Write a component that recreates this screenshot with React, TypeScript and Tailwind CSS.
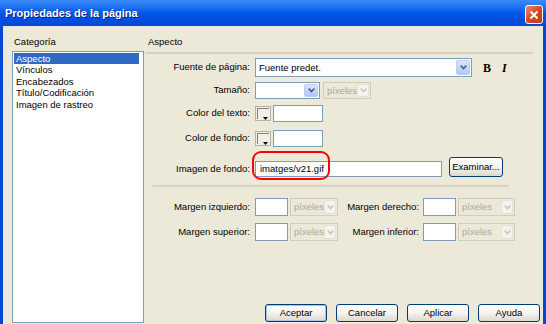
import React from "react";

const Arrow = ({ off }: { off?: boolean }) => (
    <span
        className={
            off
                ? "flex items-center justify-center w-[12px] h-full border border-[#E4E2D8] rounded-[2px] bg-[#F4F3EE]"
                : "flex items-center justify-center w-[14px] h-full border border-[#B9CCF6] rounded-[2px] bg-linear-to-b from-[#D9E4FD] to-[#B2C7F7]"
        }
    >
        <svg width="7" height="5" viewBox="0 0 7 5">
            <path
                d="M0.7 0.7 L3.5 3.5 L6.3 0.7"
                fill="none"
                stroke={off ? "#CBC9BD" : "#4D6185"}
                strokeWidth="1.7"
            />
        </svg>
    </span>
);

const Select = ({ text, cls, off }: { text: string; cls: string; off?: boolean }) => (
    <div
        className={
            (off
                ? "flex items-stretch border border-[#CFCCC0] bg-[#ECE9D8] p-px text-[#ACA899] "
                : "flex items-stretch border border-[#7F9DB9] bg-white p-px ") + cls
        }
    >
        <span className="flex-1 flex items-center pl-[2px] leading-none">{text}</span>
        <Arrow off={off} />
    </div>
);

const Picker = () => (
    <div className="w-[16px] h-[15px] border border-[#B5B3A6] bg-[#F2F0E6] p-px">
        <div className="w-full h-full border-l border-t border-[#808078] flex items-end justify-end pr-px">
            <svg width="5" height="3" viewBox="0 0 5 3" className="mb-[-1px]">
                <path d="M0 0 H5 L2.5 3 Z" fill="#000" />
            </svg>
        </div>
    </div>
);

const Input = ({ cls, value }: { cls: string; value?: string }) => (
    <div className={"flex items-center border border-[#7F9DB9] bg-white pl-[4px] " + cls}>{value}</div>
);

const Btn = ({ text, cls, main }: { text: string; cls: string; main?: boolean }) => (
    <div
        className={
            "flex items-center justify-center border border-[#003C74] rounded-[3px] bg-linear-to-b from-white via-[#F5F4EF] to-[#DCD8CC] " +
            (main ? "shadow-[inset_0_0_0_1px_#A8C4F0] " : "") +
            cls
        }
    >
        {text}
    </div>
);

const Label = ({ text, cls }: { text: string; cls: string }) => (
    <span className={"text-right shrink-0 " + cls}>{text}</span>
);

export default function App() {
    const cats = ["Aspecto", "Vínculos", "Encabezados", "Título/Codificación", "Imagen de rastreo"];
    return (
        <div className="w-[546px] h-[324px] overflow-hidden relative font-['Liberation_Sans',Arial,sans-serif] text-[9.5px] text-black bg-[#ECE9D8]">
            {/* title bar */}
            <div className="h-[26px] flex items-start bg-linear-to-b from-[#3A8CF8] via-[#0258EA] to-[#0147D6]">
                <span className="mt-[7px] pl-[5px] text-[11px] font-bold text-white leading-[13px] [text-shadow:1px_1px_0_#0A1E7A]">
                    Propiedades de la página
                </span>
                <div className="ml-auto mr-[3px] mt-[5px] w-[18px] h-[19px] rounded-[3px] border border-white bg-linear-to-br from-[#E9866A] via-[#D9471F] to-[#C23A12] flex items-center justify-center">
                    <svg width="10" height="10" viewBox="0 0 10 10">
                        <path d="M1.5 1.5 L8.5 8.5 M8.5 1.5 L1.5 8.5" stroke="#fff" strokeWidth="2" />
                    </svg>
                </div>
            </div>

            <div className="flex h-[298px] border-x-[3px] border-[#0846D8]">
                {/* categories */}
                <div className="w-[141px] shrink-0 flex flex-col pt-[10px]">
                    <span className="pl-[11px] leading-[12px]">Categoría</span>
                    <div className="ml-[9px] mt-[3px] w-[132px] h-[272px] border border-[#7F9DB9] bg-white pt-px pl-px pr-[4px]">
                        {cats.map((c, i) => (
                            <div
                                key={c}
                                className={
                                    i === 0
                                        ? "h-[11.4px] leading-[11.4px] pl-[2px] bg-[#316AC5] text-white"
                                        : "h-[11.4px] leading-[11.4px] pl-[2px]"
                                }
                            >
                                {c}
                            </div>
                        ))}
                    </div>
                </div>

                {/* form */}
                <div className="flex-1 flex flex-col pt-[10px]">
                    <span className="pl-[4px] leading-[12px]">Aspecto</span>
                    <div className="mt-[4px] ml-px w-[388px] h-[2px] bg-[#D6D3C5] rounded-full" />

                    <div className="mt-[4px] h-[19px] flex items-center">
                        <Label text="Fuente de página:" cls="w-[106px]" />
                        <Select text="Fuente predet." cls="ml-[5px] w-[217px] h-[19px]" />
                        <span className="ml-[11px] font-['Liberation_Serif',serif] font-bold text-[12px]">B</span>
                        <span className="ml-[11px] font-['Liberation_Serif',serif] font-bold italic text-[12px]">I</span>
                    </div>

                    <div className="mt-[5px] h-[17px] flex items-center">
                        <Label text="Tamaño:" cls="w-[106px]" />
                        <Select text="" cls="ml-[5px] w-[65px] h-[17px]" />
                        <Select text="píxeles" off cls="ml-[3px] w-[48px] h-[17px]" />
                    </div>

                    <div className="mt-[6px] h-[17px] flex items-center">
                        <Label text="Color del texto:" cls="w-[106px]" />
                        <div className="ml-[5px]">
                            <Picker />
                        </div>
                        <Input cls="ml-[2px] w-[50px] h-[17px]" />
                    </div>

                    <div className="mt-[8px] h-[17px] flex items-center">
                        <Label text="Color de fondo:" cls="w-[106px]" />
                        <div className="ml-[5px]">
                            <Picker />
                        </div>
                        <Input cls="ml-[2px] w-[50px] h-[17px]" />
                    </div>

                    <div className="mt-[10px] h-[20px] flex items-end">
                        <Label text="Imagen de fondo:" cls="w-[106px] self-center mt-[4px]" />
                        <Input value="imatges/v21.gif" cls="ml-[5px] w-[187px] h-[16px]" />
                        <Btn text="Examinar..." cls="ml-[7px] w-[54px] h-[20px]" />
                    </div>

                    <div className="mt-[8px] ml-[8px] w-[357px] h-[2px] bg-[#D6D3C5] rounded-full" />

                    <div className="mt-[11px] h-[18px] flex items-center">
                        <Label text="Margen izquierdo:" cls="w-[106px]" />
                        <Input cls="ml-[5px] w-[33px] h-[18px]" />
                        <Select text="píxeles" off cls="ml-[2px] w-[48px] h-[18px]" />
                        <Label text="Margen derecho:" cls="w-[81px]" />
                        <Input cls="ml-[4px] w-[33px] h-[18px]" />
                        <Select text="píxeles" off cls="ml-[2px] w-[57px] h-[18px]" />
                    </div>

                    <div className="mt-[7px] h-[18px] flex items-center">
                        <Label text="Margen superior:" cls="w-[106px]" />
                        <Input cls="ml-[5px] w-[33px] h-[18px]" />
                        <Select text="píxeles" off cls="ml-[2px] w-[48px] h-[18px]" />
                        <Label text="Margen inferior:" cls="w-[81px]" />
                        <Input cls="ml-[4px] w-[33px] h-[18px]" />
                        <Select text="píxeles" off cls="ml-[2px] w-[57px] h-[18px]" />
                    </div>

                    <div className="mt-auto mb-[2px] pr-[3px] flex justify-end gap-[9px]">
                        <Btn text="Aceptar" main cls="w-[62px] h-[18px]" />
                        <Btn text="Cancelar" cls="w-[62px] h-[18px]" />
                        <Btn text="Aplicar" cls="w-[62px] h-[18px]" />
                        <Btn text="Ayuda" cls="w-[62px] h-[18px]" />
                    </div>
                </div>
            </div>

            {/* red highlight around the image field */}
            <div className="absolute left-[252px] top-[151px] w-[78px] h-[29px] border-2 border-[#FF0000] rounded-[9px]" />
        </div>
    );
}
